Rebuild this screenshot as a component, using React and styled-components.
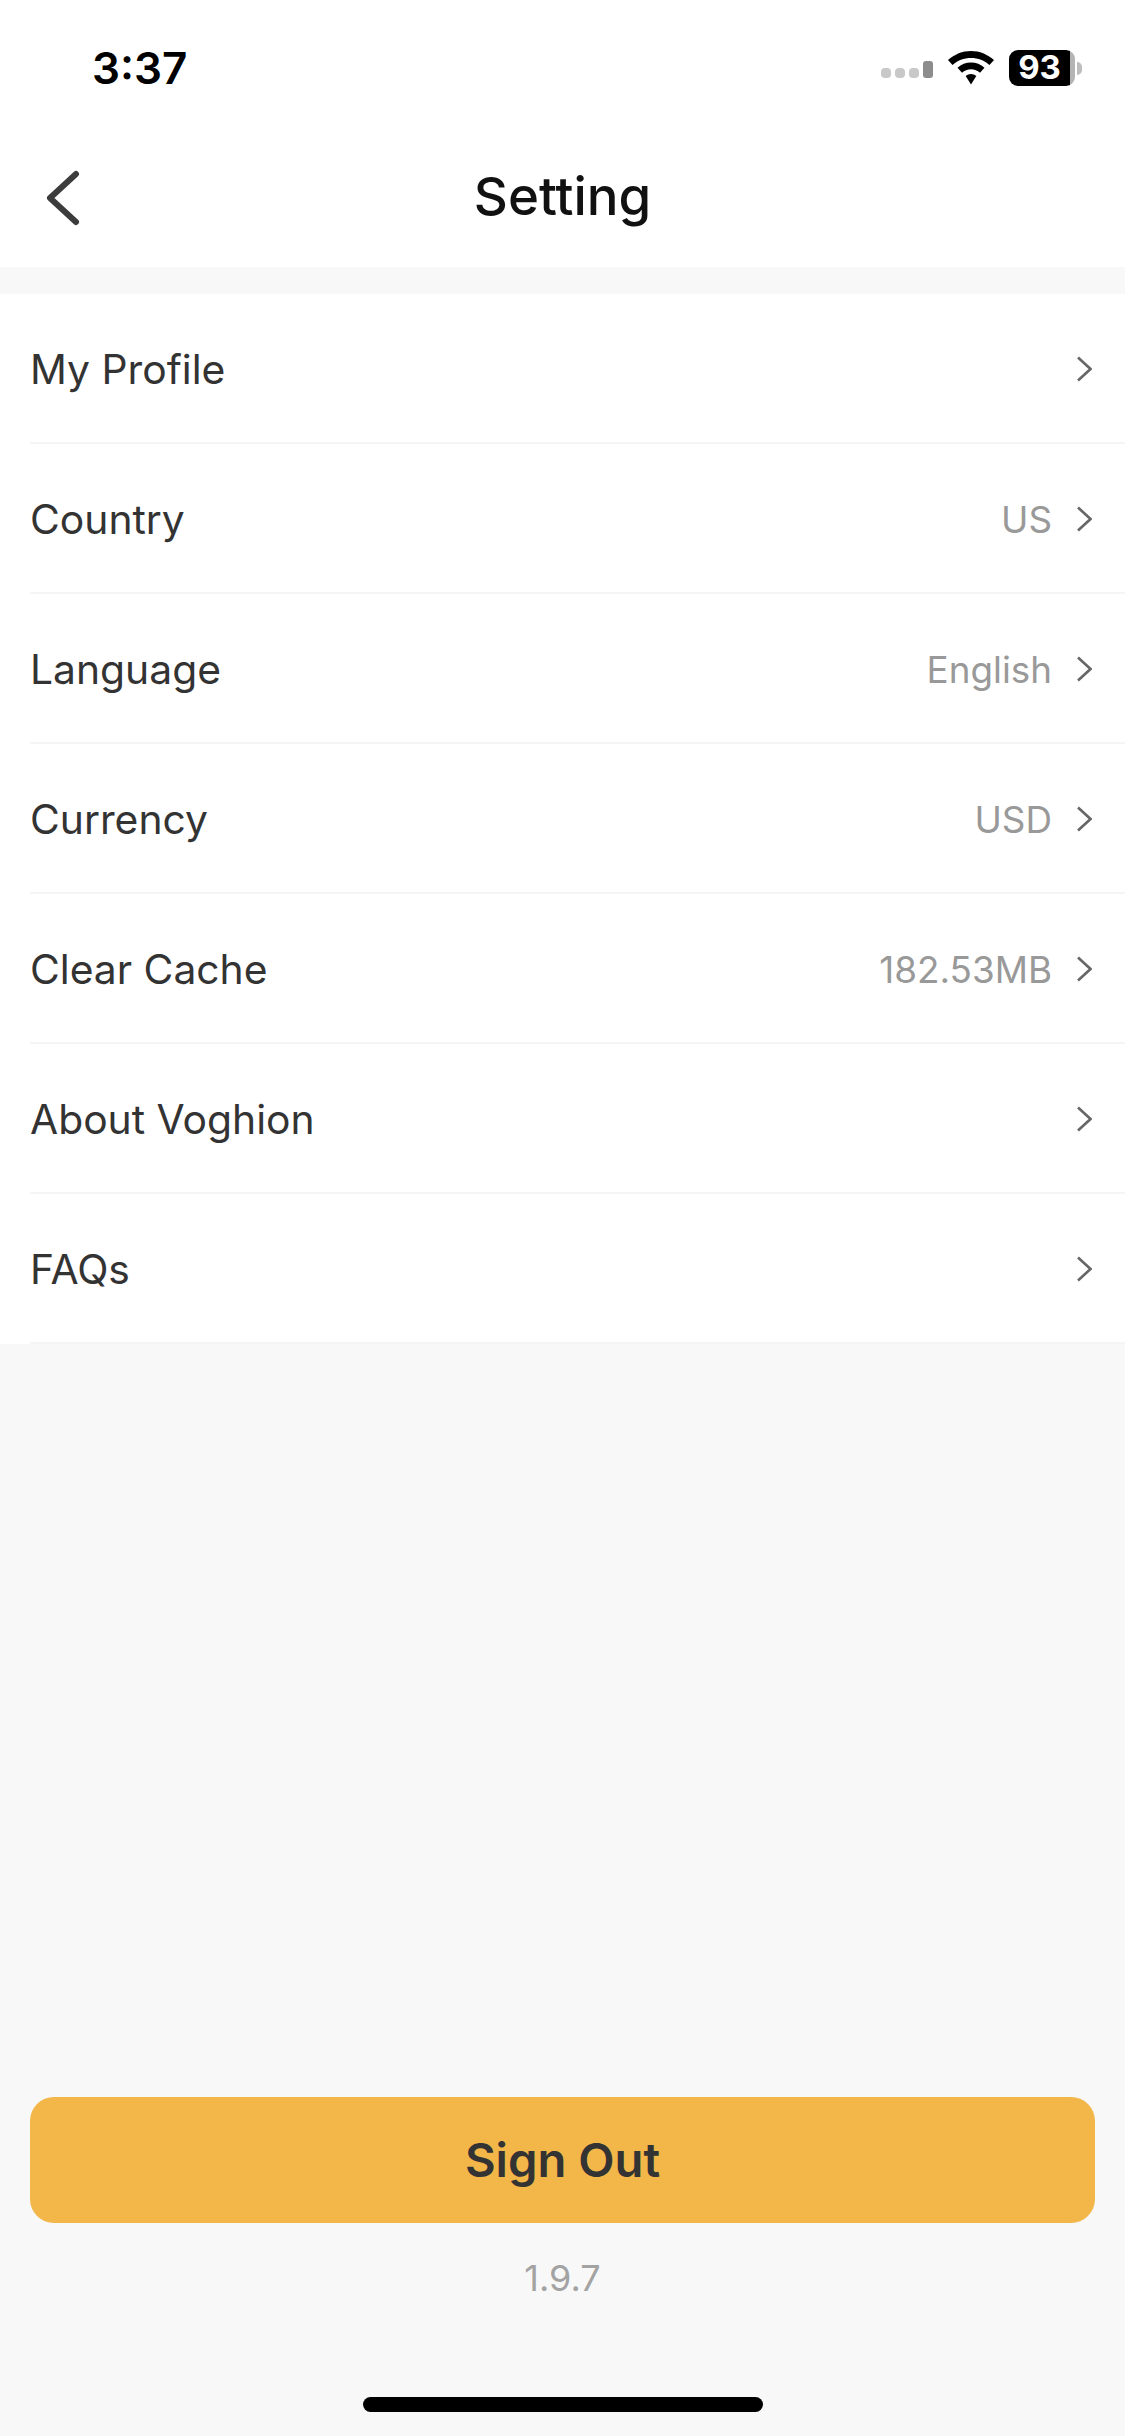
import React from "react";
import styled, { createGlobalStyle } from "styled-components";

const GlobalStyle = createGlobalStyle`
	html, body {
		margin: 0;
		padding: 0;
		background: #f8f8f8;
	}
	* {
		box-sizing: border-box;
	}
`;

const Page = styled.div`
	width: 1125px;
	height: 2436px;
	display: flex;
	flex-direction: column;
	overflow: hidden;
	background: #f8f8f8;
	font-family: Inter, "Liberation Sans", sans-serif;
`;

const StatusBar = styled.div`
	height: 105px;
	flex: none;
	display: flex;
	align-items: center;
	justify-content: space-between;
	padding: 32px 50px 0 92px;
	background: #fff;
`;

const Time = styled.span`
	font-size: 44px;
	font-weight: 600;
	line-height: 1;
	color: #000;
	position: relative;
	top: -1px;
`;

const StatusIcons = styled.div`
	display: flex;
	align-items: center;
	gap: 15px;
	position: relative;
	top: -1px;
`;

const Battery = styled.div`
	position: relative;
	width: 66px;
	height: 36px;
	display: flex;
	align-items: center;
	justify-content: center;
	padding-right: 5px;
	border-radius: 9px;
	background: linear-gradient(to right, #000 0, #000 61px, #b4b4b4 61px);
	color: #fff;
	font-size: 33px;
	font-weight: 700;
	line-height: 1;

	&::after {
		content: "";
		position: absolute;
		right: -7px;
		top: 12px;
		width: 5px;
		height: 13px;
		border-radius: 0 7px 7px 0;
		background: #bdbdbd;
	}
`;

const NavBar = styled.header`
	height: 162px;
	flex: none;
	position: relative;
	display: flex;
	align-items: center;
	justify-content: center;
	padding-top: 19px;
	background: #fff;
`;

const BackIcon = styled.svg`
	position: absolute;
	left: 44px;
	top: 64px;
`;

const Title = styled.h1`
	margin: 0;
	font-size: 52.8px;
	font-weight: 500;
	color: #111;
`;

const List = styled.ul`
	list-style: none;
	margin: 27px 0 0;
	padding: 0 0 0 30px;
	background: #fff;
`;

const Row = styled.li`
	height: 150px;
	display: flex;
	align-items: center;
	justify-content: space-between;
	padding: 2px 33px 0 0;
	border-bottom: 2px solid #f5f5f5;
`;

const Label = styled.span`
	font-size: 40.8px;
	color: #333;
`;

const Right = styled.div`
	display: flex;
	align-items: center;
	gap: 25px;
`;

const Value = styled.span`
	font-size: 36.8px;
	color: #999;
`;

const Footer = styled.footer`
	margin-top: auto;
	display: flex;
	flex-direction: column;
	align-items: center;
	padding: 0 30px 24px;
`;

const SignOut = styled.button`
	width: 100%;
	height: 126px;
	padding: 0 0 2px;
	border: 0;
	border-radius: 24px;
	background: #f3b749;
	color: #333;
	font-family: inherit;
	font-size: 47.2px;
	font-weight: 600;
`;

const Version = styled.div`
	margin-top: 33px;
	font-size: 36px;
	line-height: 44px;
	color: #a3a3a3;
`;

const HomeBar = styled.div`
	margin-top: 97px;
	width: 400px;
	height: 15px;
	border-radius: 8px;
	background: #000;
`;

const Chevron = () => (
	<svg width="15" height="26" viewBox="0 0 15 26" fill="none">
		<path d="M1 1.5 L13.5 13 L1 24.5" stroke="#666" strokeWidth="2.6" />
	</svg>
);

const SignalIcon = () => (
	<svg width="52" height="30" viewBox="0 0 52 30">
		<rect x="0" y="15" width="10" height="10" rx="4" fill="#c8c8c8" />
		<rect x="14" y="15" width="10" height="10" rx="4" fill="#c8c8c8" />
		<rect x="28" y="15" width="10" height="10" rx="4" fill="#c8c8c8" />
		<rect x="42" y="8" width="10" height="17" rx="3" fill="#8c8c8c" />
	</svg>
);

const WifiIcon = () => (
	<svg width="46" height="34" viewBox="0 0 46 34">
		<path d="M23 0 C31.500 0 39.500 3.300 46 9 L41.500 14 C36.500 9.500 30 7 23 7 C16 7 9.500 9.500 4.500 14 L0 9 C6.500 3.300 14.500 0 23 0 Z" fill="#000" />
		<path d="M23 11.500 C28 11.500 32.800 13.400 36.500 16.800 L32 21.800 C29.500 19.500 26.400 18.300 23 18.300 C19.600 18.300 16.500 19.500 14 21.800 L9.500 16.800 C13.200 13.400 18 11.500 23 11.500 Z" fill="#000" />
		<path d="M23 23 C25 23 26.800 23.700 28.300 25 L23 33.500 L17.700 25 C19.200 23.700 21 23 23 23 Z" fill="#000" />
	</svg>
);

const rows = [
	{ label: "My Profile" },
	{ label: "Country", value: "US" },
	{ label: "Language", value: "English" },
	{ label: "Currency", value: "USD" },
	{ label: "Clear Cache", value: "182.53MB" },
	{ label: "About Voghion" },
	{ label: "FAQs" },
];

const App = () => (
	<Page>
		<GlobalStyle />
		<StatusBar>
			<Time>3:37</Time>
			<StatusIcons>
				<SignalIcon />
				<WifiIcon />
				<Battery>93</Battery>
			</StatusIcons>
		</StatusBar>
		<NavBar>
			<BackIcon width="36" height="58" viewBox="0 0 36 58" fill="none">
				<path d="M32 5 L6 29 L32 53" stroke="#3c3c3c" strokeWidth="6" strokeLinecap="round" strokeLinejoin="round" />
			</BackIcon>
			<Title>Setting</Title>
		</NavBar>
		<List>
			{rows.map((row) => (
				<Row key={row.label}>
					<Label>{row.label}</Label>
					<Right>
						{row.value && <Value>{row.value}</Value>}
						<Chevron />
					</Right>
				</Row>
			))}
		</List>
		<Footer>
			<SignOut>Sign Out</SignOut>
			<Version>1.9.7</Version>
			<HomeBar />
		</Footer>
	</Page>
);

export default App;
